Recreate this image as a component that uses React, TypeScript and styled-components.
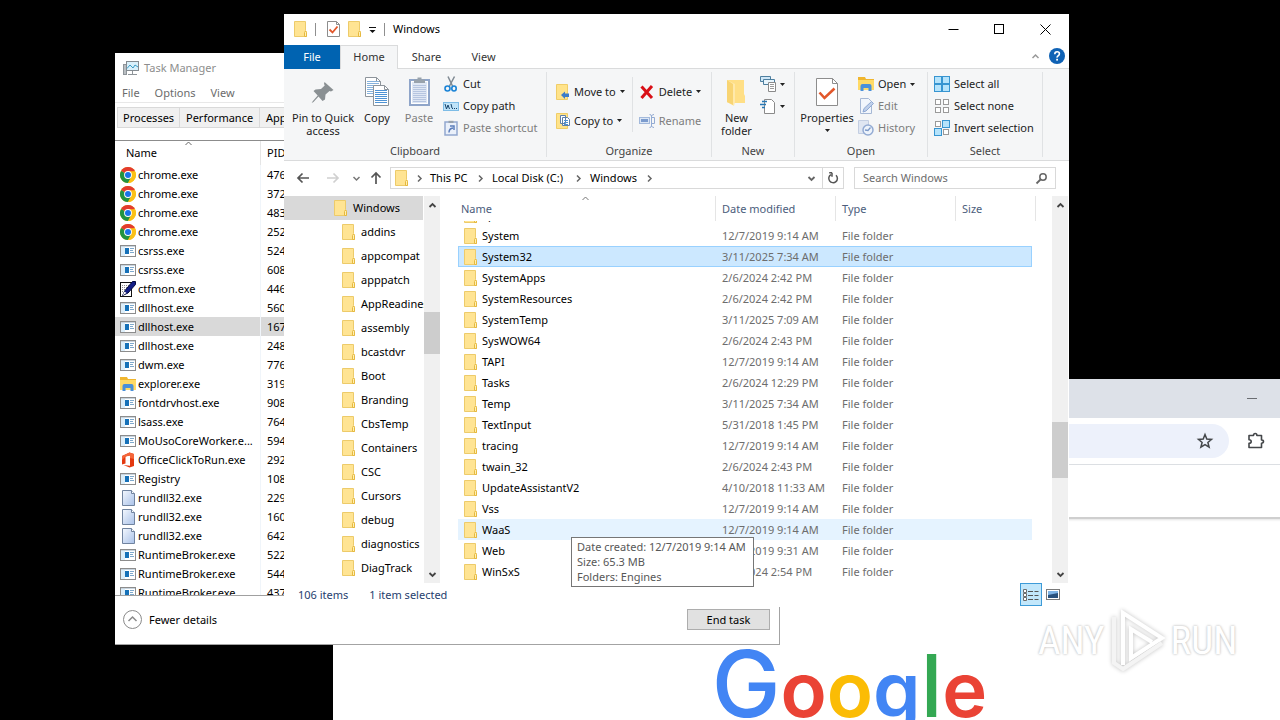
import React from "react";
import styled, { createGlobalStyle, css } from "styled-components";

const GlobalStyle = createGlobalStyle`
  *, *::before, *::after { box-sizing: border-box; }
  body { margin: 0; background: #000; }
  body, button, input, table {
    font-family: "Noto Sans", "Open Sans", sans-serif;
    font-size: 11px;
    line-height: 14px;
  }
  button { border: 0; padding: 0; background: none; color: inherit; cursor: default; }
  svg { display: block; flex: none; }
`;

/* ---------- desktop ---------- */

const Desktop = styled.main`
  position: relative;
  width: 100%;
  height: 100vh;
  overflow: hidden;
  background: #000;
  color: #000;
`;

const Window = styled.section<{ $x: number; $y: number; $w: number; $h: number }>`
  position: absolute;
  left: ${(p) => p.$x}px;
  top: ${(p) => p.$y}px;
  width: ${(p) => p.$w}px;
  height: ${(p) => p.$h}px;
  display: flex;
  flex-direction: column;
  background: #fff;
`;

/* ---------- icons ---------- */

const FolderIcon = () => (
  <svg width="13" height="16" viewBox="0 0 13 16">
    <path d="M0.5 0.5h11v9l1 1.5v4.500h-12z" fill="#ffe493" stroke="#edcb6a" />
    <path d="M10.500 15.500v-4l1-1.500 1 1.500v4z" fill="#fff0b5" stroke="#e6b93f" />
  </svg>
);

const ChromeIcon = () => (
  <svg width="16" height="16" viewBox="0 0 16 16">
    <circle cx="8" cy="8" r="8" fill="#fbc116" />
    <path d="M8 8 1.070 4A8 8 0 0 1 14.930 4z" fill="#e33b2e" />
    <path d="M8 8 1.070 4A8 8 0 0 0 8 16l3.400-6z" fill="#229342" />
    <path d="M8 4.200h6.950A8 8 0 0 1 8 16l3.300-6z" fill="#fbc116" />
    <circle cx="8" cy="8" r="3.900" fill="#fff" />
    <circle cx="8" cy="8" r="3" fill="#1a73e8" />
  </svg>
);

const AppIcon = () => (
  <svg width="16" height="16" viewBox="0 0 16 16">
    <rect x="0.500" y="2.500" width="15" height="11" fill="#fff" stroke="#8c8c8c" />
    <rect x="1" y="3" width="14" height="1" fill="#c8d4de" />
    <rect x="1" y="4" width="4" height="9" fill="#dceefa" />
    <rect x="5" y="5" width="4" height="6" fill="#1671b8" />
    <path d="M10 5.500h4M10 7.500h3M10 9.500h4" stroke="#7ea9cc" />
  </svg>
);

const PenIcon = () => (
  <svg width="16" height="16" viewBox="0 0 16 16">
    <rect x="0.500" y="1.500" width="11" height="14" fill="#fff" stroke="#111" />
    <path d="M2 4.500h8M2 6.500h8M2 8.500h6M2 10.500h4" stroke="#888" strokeDasharray="1 1" />
    <path d="M2.500 14.500 5 9.500 12.500 0.500h3v3L8 12z" fill="#121d86" stroke="#050b40" />
    <path d="m2.500 14.500 2-4 2 1.500z" fill="#fff" />
  </svg>
);

const ExplorerIcon = () => (
  <svg width="16" height="16" viewBox="0 0 16 16">
    <path d="M0 1h7l1 2h8v10H0z" fill="#f0b62f" />
    <path d="M0 4h16v10H0z" fill="#ffda66" />
    <path d="M2.500 15v-5q0-2 2-2h7q2 0 2 2v5h-3v-3h-5v3z" fill="#4a90d9" />
  </svg>
);

const OfficeIcon = () => (
  <svg width="16" height="16" viewBox="0 0 16 16">
    <path d="M9.500 0.500 14 2v12l-4.500 1.500L3.500 13 10 13.700V3.400L5.500 4.500v7L2 12.500V4z" fill="#e3380f" />
    <path d="M9.500 0.500 14 2v5l-4-1V3.400L5.500 4.500 2 8V4z" fill="#f4663a" />
  </svg>
);

const PageIcon = () => (
  <svg width="16" height="16" viewBox="0 0 16 16">
    <defs>
      <linearGradient id="page" x1="0" y1="0" x2="1" y2="1">
        <stop offset="0" stopColor="#f4f8fe" />
        <stop offset="1" stopColor="#a9c1e8" />
      </linearGradient>
    </defs>
    <path d="M2.500 0.500h9l3 3v12h-12z" fill="url(#page)" stroke="#70839f" />
    <path d="M11.500 0.500v3h3" fill="#fff" stroke="#70839f" />
  </svg>
);

const TaskManagerIcon = () => (
  <svg width="16" height="16" viewBox="0 0 16 16">
    <rect x="0.500" y="4.500" width="3" height="10" fill="#b9bec2" stroke="#8e9499" />
    <rect x="3.500" y="1.500" width="12" height="9" fill="#d9f0fb" stroke="#848b91" />
    <path d="M4 8.500 7 5l3 3 2-3 3 2" fill="none" stroke="#3b9cc5" />
    <path d="M9.500 11v3M5 14.500h9" stroke="#8e9499" />
  </svg>
);

const CheckPageSmall = () => (
  <svg width="13" height="16" viewBox="0 0 13 16">
    <path d="M0.500 0.500h9l3 3v12h-12z" fill="#fff" stroke="#8d8d8d" />
    <path d="M9.500 0.500v3h3" fill="none" stroke="#8d8d8d" />
    <path d="m2.500 8.500 3 3 5-6" fill="none" stroke="#e2572b" strokeWidth="1.800" />
  </svg>
);

const CheckPageLarge = () => (
  <svg width="32" height="32" viewBox="-5 -1 32 32">
    <path d="M0.500 0.500h16l5 5v22h-21z" fill="#fff" stroke="#8d8d8d" />
    <path d="M16.500 0.500v5h5" fill="none" stroke="#8d8d8d" />
    <path d="m3.500 14.500 5 5.500L18.500 10.500" fill="none" stroke="#e2572b" strokeWidth="2.600" />
  </svg>
);

const PinIcon = () => (
  <svg width="32" height="32" viewBox="0 0 32 32">
    <path d="m17.500 5 9 8-2.500 1.400-1.500-.400-4 3.500-.500 5-2.500 1.500-4-4.500-5 5.500-1.800 1 1-1.800 5-5.700L6.500 14l2-1.500 5.500-.500 3.700-3.500-.700-1.800z" fill="#8a9093" />
  </svg>
);

const Lines = ({ x, y, n, w, c }: { x: number; y: number; n: number; w: number; c: string }) => (
  <path d={Array.from({ length: n }, (_, i) => `M${x} ${y + i * 2 + 0.5}h${w}`).join("")} stroke={c} />
);

const CopyIcon = () => (
  <svg width="32" height="32" viewBox="0 0 32 32">
    <path d="M4.500 0.500h11l4 4v15h-15z" fill="#fff" stroke="#8d949b" />
    <path d="M15.500 0.500v4h4" fill="none" stroke="#8d949b" />
    <Lines x={6} y={4} n={7} w={12} c="#86b2dc" />
    <path d="M12.500 8.500h11l4 4v16h-15z" fill="#fff" stroke="#8d949b" />
    <path d="M23.500 8.500v4h4" fill="none" stroke="#8d949b" />
    <Lines x={14} y={13} n={7} w={12} c="#4f93d4" />
  </svg>
);

const PasteIcon = () => (
  <svg width="32" height="32" viewBox="0 0 32 32">
    <rect x="7" y="3" width="19" height="25" fill="#fff" stroke="#8fa5c9" strokeWidth="2" />
    <rect x="9" y="5" width="15" height="21" fill="#dfe7f4" />
    <Lines x={10} y={8} n={9} w={13} c="#b6c5e0" />
    <path d="M11 6V2.500h3.500V0.500h4v2H22V6z" fill="#98a2ac" />
  </svg>
);

const CutIcon = () => (
  <svg width="16" height="16" viewBox="0 0 16 16">
    <path d="M5 0.500 9.500 10M11.500 0.500 6.500 10" stroke="#7f8992" strokeWidth="1.500" fill="none" />
    <ellipse cx="4.500" cy="12.500" rx="2.500" ry="2.500" fill="none" stroke="#1a83d6" strokeWidth="1.600" />
    <ellipse cx="11" cy="12.500" rx="2.200" ry="2.500" fill="none" stroke="#1a83d6" strokeWidth="1.600" />
  </svg>
);

const CopyPathIcon = () => (
  <svg width="16" height="16" viewBox="0 0 16 16">
    <rect x="0.500" y="4.500" width="15" height="8" fill="#bfe3f8" stroke="#7dbce6" />
    <path d="m2 6 1.500 5L5 7l1.500 4M8 6l1 4" fill="none" stroke="#17456d" />
    <path d="M9 10.500h6" stroke="#17456d" strokeDasharray="1 1" />
  </svg>
);

const PasteShortcutIcon = () => (
  <svg width="16" height="16" viewBox="0 0 16 16">
    <rect x="2" y="2" width="12" height="13" fill="#eaf0fa" stroke="#92a8cf" strokeWidth="1.500" />
    <path d="M5.500 3V0.800h5V3z" fill="#98a2ac" />
    <path d="M6 12.500q0-4 4-4.500M7 6h4v4" fill="none" stroke="#5b7dbb" strokeWidth="1.500" />
  </svg>
);

const MoveToIcon = () => (
  <svg width="14" height="16" viewBox="0 0 14 16">
    <path d="M0.500 0.500h11v15h-11z" fill="#ffe38a" stroke="#f0cd68" />
    <path d="m5 11 4-3.500v2h4V13H9v2z" fill="#3d7cc9" />
  </svg>
);

const CopyToIcon = () => (
  <svg width="14" height="16" viewBox="0 0 14 16">
    <path d="M0.500 0.500h11v15h-11z" fill="#ffe38a" stroke="#f0cd68" />
    <path d="M4.500 2.500h5v8h-5zM6.500 4.500h5l2 2v6h-7z" fill="#fff" stroke="#5e7fa8" />
    <Lines x={8} y={7} n={3} w={4} c="#4f93d4" />
  </svg>
);

const DeleteIcon = () => (
  <svg width="16" height="16" viewBox="0 0 16 16">
    <path d="M2.500 2.500 13 14M13 2 2.500 14" stroke="#d90f16" strokeWidth="3" />
  </svg>
);

const RenameIcon = () => (
  <svg width="16" height="16" viewBox="0 0 16 16">
    <rect x="0.500" y="4.500" width="10" height="6" fill="#dbe6f5" stroke="#a3b9db" />
    <rect x="2" y="6" width="7" height="3" fill="#7c9cce" />
    <path d="M10.500 1.500q2 0 2 1.500v10q0 1.500-2 1.500M15 1.500q-2 0-2.500 1.500M15 14.500q-2 0-2.500-1.500M13 4.500h2.500v6H13" fill="none" stroke="#93abd3" />
  </svg>
);

const NewFolderIcon = () => (
  <svg width="32" height="32" viewBox="0 0 32 32">
    <path d="M6 3h17v14l1 2v7H8l-2-1z" fill="#ffdf86" />
    <path d="M6 3l8 4v18l-1 4-7-4z" fill="#ffe9ab" />
    <path d="M6 3l6 4v21l-6-3z" fill="#f8d473" />
  </svg>
);

const NewItemIcon = () => (
  <svg width="16" height="16" viewBox="0 0 16 16">
    <path d="M0.500 0.500h10v5h-10z" fill="#cfe7f8" stroke="#4e7f9f" />
    <path d="M3.500 3.500h11v5h-11z" fill="#e8f5fd" stroke="#4e7f9f" />
    <path d="M8.500 6.500h7v9h-7z" fill="#fff" stroke="#8a8a8a" />
    <Lines x={10} y={8} n={3} w={4} c="#9a9a9a" />
  </svg>
);

const EasyAccessIcon = () => (
  <svg width="16" height="16" viewBox="0 0 16 16">
    <path d="M4.500 1.500h7l3 3v11h-10z" fill="#fff" stroke="#8a8a8a" />
    <path d="M2 3.500h5M0 6.500h6M2 9.500h3" stroke="#2878b5" strokeWidth="1.500" />
  </svg>
);

const EditIcon = () => (
  <svg width="16" height="16" viewBox="0 0 16 16">
    <path d="M2.500 0.500h8l3 3v12h-11z" fill="#f2f6fc" stroke="#a6b8d5" />
    <path d="m5 14 1-3.500 7.500-7 2 2-7.500 7.500z" fill="#c0d0ea" stroke="#8fa9d4" />
  </svg>
);

const HistoryIcon = () => (
  <svg width="16" height="16" viewBox="0 0 16 16">
    <path d="M0.500 0.500h10v13h-10z" fill="#dfe6f2" stroke="#c3cee2" />
    <circle cx="10" cy="10" r="5" fill="#edf3fb" stroke="#93abd3" strokeWidth="1.500" />
    <path d="M12.500 7.500 10 10.500 7 10" fill="none" stroke="#7c99c8" strokeWidth="1.300" />
  </svg>
);

const SelectIcon = ({ on }: { on: boolean[] }) => (
  <svg width="16" height="16" viewBox="0 0 16 16">
    {on.map((v, i) => {
      const x = (i % 2) * 8;
      const y = Math.floor(i / 2) * 8;
      return v ? (
        <rect key={i} x={x + 0.5} y={y + 0.5} width="7" height="7" fill="#b5e3fb" stroke="#3795d1" />
      ) : (
        <rect key={i} x={x + 1.5} y={y + 1.5} width="5" height="5" fill="#fff" stroke="#9a9a9a" />
      );
    })}
  </svg>
);

const Caret = () => (
  <svg width="5" height="3" viewBox="0 0 5 3">
    <path d="M0 0h5L2.500 3z" fill="#222" />
  </svg>
);

type ChevronDir = "up" | "down" | "right";
const chevronPaths: Record<ChevronDir, string> = {
  up: "m1.500 6 3-3 3 3",
  down: "m1.500 3 3 3 3-3",
  right: "m3 1.500 3 3-3 3",
};
const Chevron = ({ dir, color = "#666", weight = 1.5 }: { dir: ChevronDir; color?: string; weight?: number }) => (
  <svg width="9" height="9" viewBox="0 0 9 9">
    <path d={chevronPaths[dir]} fill="none" stroke={color} strokeWidth={weight} />
  </svg>
);

const ArrowIcon = ({ angle, color }: { angle: number; color: string }) => (
  <svg width="14" height="14" viewBox="0 0 14 14">
    <path d="M13 7H2M6.500 2.500 2 7l4.500 4.500" transform={`rotate(${angle} 7 7)`} fill="none" stroke={color} strokeWidth="1.700" />
  </svg>
);

/* ---------- browser window ---------- */

const TabStrip = styled.header`
  display: flex;
  flex: none;
  justify-content: flex-end;
  align-items: center;
  height: 39px;
  padding: 0 109px 1px 0;
  background: #dde1e8;
`;

const BrowserBar = styled.div`
  display: flex;
  flex: none;
  align-items: center;
  gap: 18px;
  height: 47px;
  padding: 0 101px 1px 90px;
  border-bottom: 1px solid #dcdfe3;
`;

const Omnibox = styled.div`
  display: flex;
  flex: 1;
  justify-content: flex-end;
  align-items: center;
  height: 34px;
  padding-right: 15px;
  border-radius: 17px;
  background: #edf1fb;
`;

const InfoBar = styled.div`
  flex: none;
  height: 54px;
  border-bottom: 2px solid #cfcfcf;
  box-shadow: 0 1px 2px #e4e4e4;
`;

const SearchPage = styled.div`
  display: flex;
  flex: 1;
  justify-content: center;
  align-items: flex-start;
  padding-top: 115px;
`;

const Logo = styled.h1`
  margin: 0;
  font: 600 76px/100px Inter, "Open Sans", sans-serif;
  font-optical-sizing: none;
  white-space: nowrap;
`;

const LogoLetter = styled.span<{ $c: string; $size?: number }>`
  color: ${(p) => p.$c};
  font-size: ${(p) => p.$size ?? 76}px;
  font-weight: ${(p) => (p.$size ? 500 : 600)};
`;

const Browser = () => (
  <Window $x={333} $y={379} $w={1033} $h={520}>
    <TabStrip>
      <button aria-label="Minimize">
        <svg width="10" height="10" viewBox="0 0 10 10"><path d="M0 5.500h10" stroke="#6a6d72" /></svg>
      </button>
    </TabStrip>
    <BrowserBar>
      <Omnibox>
        <button aria-label="Bookmark">
          <svg width="18" height="18" viewBox="0 0 18 18">
            <path d="m9 2.500 1.800 4.600 4.700.300-3.600 3.100 1.200 4.700L9 12.600l-4.100 2.600 1.200-4.700-3.600-3.100 4.700-.300z" fill="none" stroke="#44474a" strokeWidth="1.500" />
          </svg>
        </button>
      </Omnibox>
      <button aria-label="Extensions">
        <svg width="18" height="18" viewBox="0 0 18 18">
          <path d="M2 3.500h4.500q0-2 1.700-2t1.700 2h4.600V8q2 0 2 1.600t-2 1.600v4.300H2v-4.200q2.200 0 2.200-1.800T2 7.700z" fill="none" stroke="#44474a" strokeWidth="1.600" strokeLinejoin="round" />
        </svg>
      </button>
    </BrowserBar>
    <InfoBar />
    <SearchPage>
      <Logo>
        <LogoLetter $c="#4285f4" $size={92}>G</LogoLetter>
        <LogoLetter $c="#ea4335">o</LogoLetter>
        <LogoLetter $c="#fbbc05">o</LogoLetter>
        <LogoLetter $c="#4285f4">g</LogoLetter>
        <LogoLetter $c="#34a853" $size={86}>l</LogoLetter>
        <LogoLetter $c="#ea4335">e</LogoLetter>
      </Logo>
    </SearchPage>
  </Window>
);

/* ---------- task manager ---------- */

const TaskFrame = styled(Window)`
  border-right: 1px solid #a3a3a3;
  border-bottom: 1px solid #a3a3a3;
`;

const TaskTitle = styled.header`
  display: flex;
  flex: none;
  align-items: center;
  gap: 5px;
  height: 30px;
  padding: 0 0 1px 8px;
  color: #8d8d8d;
`;

const TaskMenu = styled.nav`
  display: flex;
  flex: none;
  align-items: center;
  gap: 15px;
  height: 20px;
  padding-left: 7px;
  border-bottom: 1px solid #e8e8e8;
  color: #6b6b6b;
`;

const TaskTabs = styled.div`
  display: flex;
  flex: none;
  align-items: flex-start;
  height: 38px;
  padding: 4px 2px 0;
  border-bottom: 1px solid #8c8c8c;
`;

const TaskTab = styled.button<{ $w: number }>`
  width: ${(p) => p.$w}px;
  height: 21px;
  padding-left: 6px;
  border: 1px solid #d9d9d9;
  border-left-width: 0;
  background: #f0f0f0;
  text-align: left;
  &:first-child { padding-left: 5px; border-left-width: 1px; }
`;

const ProcessPane = styled.div`
  flex: 1;
  min-height: 0;
  overflow: hidden;
`;

const ProcessTable = styled.table`
  width: 100%;
  table-layout: fixed;
  border-collapse: separate;
  border-spacing: 0;
  th, td { padding: 0; font-weight: 400; text-align: left; white-space: nowrap; }
  th { position: relative; height: 24px; border-right: 1px solid #e5e5e5; }
  th:first-child { width: 146px; padding-left: 11px; }
  th + th, td + td { padding-left: 6px; }
  td { height: 19px; border-right: 1px solid #f0f5fa; }
`;

const ProcessRow = styled.tr<{ $selected: boolean }>`
  background: ${(p) => (p.$selected ? "#d9d9d9" : "transparent")};
`;

const ProcessName = styled.div`
  display: flex;
  align-items: center;
  gap: 2px;
  height: 19px;
  padding-left: 5px;
`;

const SortMark = styled.span<{ $x: number; $y: number }>`
  position: absolute;
  left: ${(p) => p.$x}px;
  top: ${(p) => p.$y}px;
`;

const TaskFooter = styled.footer`
  display: flex;
  flex: none;
  justify-content: space-between;
  align-items: center;
  height: 49px;
  padding: 0 9px 1px 8px;
  border-top: 1px solid #a0a0a0;
`;

const FewerButton = styled.button`
  display: flex;
  align-items: center;
  gap: 7px;
`;

const EndTask = styled.button`
  width: 83px;
  height: 21px;
  border: 1px solid #adadad;
  background: #e1e1e1;
`;

const processes: [React.FC, string, string][] = [
  [ChromeIcon, "chrome.exe", "476"],
  [ChromeIcon, "chrome.exe", "372"],
  [ChromeIcon, "chrome.exe", "483"],
  [ChromeIcon, "chrome.exe", "252"],
  [AppIcon, "csrss.exe", "524"],
  [AppIcon, "csrss.exe", "608"],
  [PenIcon, "ctfmon.exe", "446"],
  [AppIcon, "dllhost.exe", "560"],
  [AppIcon, "dllhost.exe", "167"],
  [AppIcon, "dllhost.exe", "248"],
  [AppIcon, "dwm.exe", "776"],
  [ExplorerIcon, "explorer.exe", "319"],
  [AppIcon, "fontdrvhost.exe", "908"],
  [AppIcon, "lsass.exe", "764"],
  [AppIcon, "MoUsoCoreWorker.e...", "594"],
  [OfficeIcon, "OfficeClickToRun.exe", "292"],
  [AppIcon, "Registry", "108"],
  [PageIcon, "rundll32.exe", "229"],
  [PageIcon, "rundll32.exe", "160"],
  [PageIcon, "rundll32.exe", "642"],
  [AppIcon, "RuntimeBroker.exe", "522"],
  [AppIcon, "RuntimeBroker.exe", "544"],
  [AppIcon, "RuntimeBroker.exe", "437"],
];

const TaskManager = () => (
  <TaskFrame $x={115} $y={53} $w={665} $h={592}>
    <TaskTitle><TaskManagerIcon />Task Manager</TaskTitle>
    <TaskMenu>
      <button>File</button>
      <button>Options</button>
      <button>View</button>
    </TaskMenu>
    <TaskTabs>
      <TaskTab $w={63}>Processes</TaskTab>
      <TaskTab $w={80}>Performance</TaskTab>
      <TaskTab $w={74}>App</TaskTab>
    </TaskTabs>
    <ProcessPane>
      <ProcessTable>
        <thead>
          <tr>
            <th>
              Name
              <SortMark $x={69} $y={-2}><Chevron dir="up" color="#666" weight={1} /></SortMark>
            </th>
            <th>PID</th>
          </tr>
        </thead>
        <tbody>
          {processes.map(([Icon, name, pid], i) => (
            <ProcessRow key={i} $selected={i === 8}>
              <td><ProcessName><Icon />{name}</ProcessName></td>
              <td>{pid}</td>
            </ProcessRow>
          ))}
        </tbody>
      </ProcessTable>
    </ProcessPane>
    <TaskFooter>
      <FewerButton>
        <svg width="19" height="19" viewBox="0 0 19 19">
          <circle cx="9.500" cy="9.500" r="9" fill="#fff" stroke="#8a8a8a" />
          <path d="m5.500 11 4-4 4 4" fill="none" stroke="#8a8a8a" strokeWidth="1.500" />
        </svg>
        Fewer details
      </FewerButton>
      <EndTask>End task</EndTask>
    </TaskFooter>
  </TaskFrame>
);

/* ---------- explorer ---------- */

const TitleBar = styled.header`
  display: flex;
  flex: none;
  align-items: center;
  height: 31px;
  padding: 0 1px 1px 10px;
`;

const QuickAccess = styled.div`
  display: flex;
  flex: 1;
  align-items: center;
  gap: 8px;
`;

const Divider = styled.span`
  width: 1px;
  height: 13px;
  background: #8f8f8f;
  & + svg { margin-left: 3px; }
`;

const CaptionButton = styled.button`
  display: flex;
  justify-content: center;
  align-items: center;
  width: 46px;
  height: 30px;
`;

const RibbonTabs = styled.nav`
  display: flex;
  flex: none;
  height: 24px;
  padding-right: 4px;
  border-bottom: 1px solid #dadbdc;
`;

const RibbonTab = styled.button<{ $kind?: "file" | "active" }>`
  width: 57px;
  height: 24px;
  color: #333;
  ${(p) => p.$kind === "file" && css`width: 56px; background: #0063b1; color: #fff;`}
  ${(p) => p.$kind === "active" && css`
    width: 58px;
    padding-bottom: 2px;
    background: #f5f6f7;
    border: 1px solid #dadbdc;
    border-bottom: 0;
  `}
`;

const RibbonTools = styled.div`
  display: flex;
  align-items: center;
  gap: 9px;
  margin-left: auto;
  padding-bottom: 1px;
`;

const Ribbon = styled.div`
  display: flex;
  flex: none;
  height: 92px;
  border-bottom: 1px solid #dadbdc;
  background: #f5f6f7;
`;

const RibbonGroup = styled.section<{ $w: number }>`
  display: flex;
  flex-direction: column;
  width: ${(p) => p.$w}px;
  margin: 3px 0;
  border-right: 1px solid #e0e2e4;
`;

const GroupTools = styled.div`
  display: flex;
  flex: 1;
  padding-left: 6px;
`;

const GroupLabel = styled.h2`
  margin: 0;
  height: 13px;
  color: #444;
  font-size: 11px;
  font-weight: 400;
  line-height: 14px;
  text-align: center;
`;

const ToolColumn = styled.div<{ $top?: number; $left?: number }>`
  display: flex;
  flex-direction: column;
  margin: ${(p) => p.$top ?? 0}px 0 0 ${(p) => p.$left ?? 0}px;
`;

const SmallTool = styled.button<{ $off?: boolean; $tall?: boolean }>`
  display: flex;
  align-items: center;
  gap: 4px;
  height: ${(p) => (p.$tall ? 29 : 22)}px;
  color: ${(p) => (p.$off ? "#7d7d7d" : "#222")};
  white-space: nowrap;
`;

const LargeTool = styled.button<{ $w: number; $off?: boolean }>`
  display: flex;
  flex-direction: column;
  align-items: center;
  width: ${(p) => p.$w}px;
  padding-top: 5px;
  color: ${(p) => (p.$off ? "#7d7d7d" : "#222")};
  line-height: 13px;
  white-space: nowrap;
  svg + span { margin-top: 2px; }
  span + svg { margin-top: 5px; }
`;

const ToolRule = styled.span`
  width: 1px;
  margin: 5px 6px 12px 7px;
  background: #e0e2e4;
`;

const AddressRow = styled.div`
  display: flex;
  flex: none;
  align-items: center;
  height: 35px;
  padding: 0 13px 1px 12px;
`;

const NavButton = styled.button<{ $gap?: number }>`
  margin-right: ${(p) => p.$gap ?? 7}px;
`;

const AddressBox = styled.div`
  display: flex;
  flex: 1;
  align-items: center;
  height: 22px;
  padding-left: 4px;
  border: 1px solid #d9d9d9;
`;

const AddressEnd = styled.div`
  display: flex;
  margin-left: auto;
`;

const Crumb = styled.button<{ $w: number }>`
  display: flex;
  justify-content: space-between;
  align-items: center;
  width: ${(p) => p.$w}px;
  margin-left: 7px;
  white-space: nowrap;
`;

const BoxButton = styled.button<{ $ruled?: boolean }>`
  display: flex;
  justify-content: center;
  align-items: center;
  width: 21px;
  height: 20px;
  border-left: ${(p) => (p.$ruled ? "1px solid #d9d9d9" : "0")};
`;

const SearchBox = styled.label`
  display: flex;
  align-items: center;
  width: 202px;
  height: 22px;
  margin-left: 10px;
  padding: 0 7px 0 8px;
  border: 1px solid #d9d9d9;
  input {
    flex: 1;
    min-width: 0;
    height: 14px;
    padding: 0;
    border: 0;
    outline: 0;
  }
  input::placeholder { color: #6d6d6d; opacity: 1; }
`;

const Body = styled.div`
  display: flex;
  flex: 1;
  min-height: 0;
  padding-right: 1px;
`;

const Tree = styled.ul`
  width: 140px;
  margin: 0;
  padding: 0 1px 0 0;
  overflow: hidden;
  list-style: none;
`;

const TreeItem = styled.li<{ $root?: boolean }>`
  display: flex;
  align-items: center;
  gap: 6px;
  height: 24px;
  padding-left: ${(p) => (p.$root ? 50 : 58)}px;
  background: ${(p) => (p.$root ? "#d9d9d9" : "transparent")};
  white-space: nowrap;
`;

const ScrollTrack = styled.div`
  display: flex;
  flex: none;
  flex-direction: column;
  align-items: center;
  justify-content: space-between;
  width: 16px;
  padding: 5px 0 4px;
  background: #f0f0f0;
`;

const ScrollLane = styled.div<{ $before: number }>`
  flex: 1;
  width: 16px;
  padding-top: ${(p) => p.$before}px;
`;

const ScrollThumb = styled.div<{ $size: number }>`
  height: ${(p) => p.$size}px;
  background: #cdcdcd;
`;

const ListPane = styled.div`
  flex: 1;
  min-width: 0;
  padding-left: 18px;
  overflow: hidden;
`;

const FileTable = styled.table`
  width: 578px;
  table-layout: fixed;
  border-collapse: separate;
  border-spacing: 0;
  th, td { padding: 0; font-weight: 400; text-align: left; white-space: nowrap; }
  th {
    position: relative;
    height: 25px;
    padding-left: 6px;
    border-right: 1px solid #e5e5e5;
    color: #4c5d7c;
  }
  th:first-child { width: 258px; padding-left: 3px; }
  th:last-child { width: 80px; }
  td { height: 21px; padding-left: 6px; color: #6d6d6d; background-clip: padding-box; }
  td:first-child { color: #000; }
  td:last-child { border-right: 4px solid transparent; }
`;

const FileRow = styled.tr<{ $state?: string }>`
  ${(p) => p.$state === "hover" && css`td { background-color: #e5f3ff; }`}
  ${(p) => p.$state === "selected" && css`
    td { background-color: #cce8ff; box-shadow: inset 0 1px #99d1ff, inset 0 -1px #99d1ff; }
    td:first-child { box-shadow: inset 0 1px #99d1ff, inset 0 -1px #99d1ff, inset 1px 0 #99d1ff; }
    td:last-child { box-shadow: inset 0 1px #99d1ff, inset 0 -1px #99d1ff, inset -1px 0 #99d1ff; }
  `}
`;

const FileName = styled.div`
  display: flex;
  flex: none;
  align-items: center;
  gap: 5px;
  height: 21px;
`;

const PeekRow = styled.tr`
  td { height: 4px; }
`;

const Peek = styled.div`
  display: flex;
  align-items: flex-end;
  height: 4px;
  overflow: hidden;
`;

const StatusBar = styled.footer`
  display: flex;
  flex: none;
  align-items: center;
  gap: 21px;
  height: 24px;
  padding: 0 9px 0 14px;
  color: #26406e;
`;

const ViewSwitch = styled.div`
  display: flex;
  align-items: center;
  gap: 4px;
  height: 24px;
  margin-left: auto;
  padding-bottom: 1px;
`;

const ViewButton = styled.button<{ $on?: boolean }>`
  display: flex;
  justify-content: center;
  align-items: center;
  width: ${(p) => (p.$on ? 22 : 14)}px;
  height: 23px;
  ${(p) => p.$on && css`border: 1px solid #3d9bd8; background: #c2e7fb;`}
`;

const Tooltip = styled.div`
  position: absolute;
  left: 287px;
  top: 523px;
  width: 183px;
  padding: 1px 5px 2px;
  border: 1px solid #767676;
  background: #fff;
  color: #575757;
  line-height: 15px;
  white-space: nowrap;
`;

const treeItems = [
  "addins", "appcompat", "apppatch", "AppReadiness", "assembly", "bcastdvr", "Boot", "Branding",
  "CbsTemp", "Containers", "CSC", "Cursors", "debug", "diagnostics", "DiagTrack",
];

const files: [string, string, string?][] = [
  ["System", "12/7/2019 9:14 AM"],
  ["System32", "3/11/2025 7:34 AM", "selected"],
  ["SystemApps", "2/6/2024 2:42 PM"],
  ["SystemResources", "2/6/2024 2:42 PM"],
  ["SystemTemp", "3/11/2025 7:09 AM"],
  ["SysWOW64", "2/6/2024 2:43 PM"],
  ["TAPI", "12/7/2019 9:14 AM"],
  ["Tasks", "2/6/2024 12:29 PM"],
  ["Temp", "3/11/2025 7:34 AM"],
  ["TextInput", "5/31/2018 1:45 PM"],
  ["tracing", "12/7/2019 9:14 AM"],
  ["twain_32", "2/6/2024 2:43 PM"],
  ["UpdateAssistantV2", "4/10/2018 11:33 AM"],
  ["Vss", "12/7/2019 9:14 AM"],
  ["WaaS", "12/7/2019 9:14 AM", "hover"],
  ["Web", "12/7/2019 9:31 AM"],
  ["WinSxS", "2/6/2024 2:54 PM"],
];

const Scrollbar = ({ before, size }: { before: number; size: number }) => (
  <ScrollTrack>
    <Chevron dir="up" color="#444" weight={1.8} />
    <ScrollLane $before={before}><ScrollThumb $size={size} /></ScrollLane>
    <Chevron dir="down" color="#444" weight={1.8} />
  </ScrollTrack>
);

const Explorer = () => (
  <Window $x={284} $y={14} $w={785} $h={593}>
    <TitleBar>
      <QuickAccess>
        <FolderIcon />
        <Divider />
        <CheckPageSmall />
        <FolderIcon />
        <svg width="7" height="7" viewBox="0 0 7 7"><path d="M0 1.500h7" stroke="#111" /><path d="M0.500 4h6l-3 3z" fill="#111" /></svg>
        <Divider />
        <span>Windows</span>
      </QuickAccess>
      <CaptionButton aria-label="Minimize">
        <svg width="11" height="11" viewBox="0 0 11 11"><path d="M0.500 5.500h10" stroke="#000" /></svg>
      </CaptionButton>
      <CaptionButton aria-label="Maximize">
        <svg width="11" height="11" viewBox="0 0 11 11"><rect x="0.500" y="0.500" width="9" height="9" fill="none" stroke="#000" /></svg>
      </CaptionButton>
      <CaptionButton aria-label="Close">
        <svg width="11" height="11" viewBox="0 0 11 11"><path d="m0.500 0.500 10 10M10.500 0.500l-10 10" stroke="#000" /></svg>
      </CaptionButton>
    </TitleBar>
    <RibbonTabs>
      <RibbonTab $kind="file">File</RibbonTab>
      <RibbonTab $kind="active">Home</RibbonTab>
      <RibbonTab>Share</RibbonTab>
      <RibbonTab>View</RibbonTab>
      <RibbonTools>
        <Chevron dir="up" color="#999" />
        <button aria-label="Help">
          <svg width="16" height="16" viewBox="0 0 16 16">
            <circle cx="8" cy="8" r="8" fill="#0f62b5" />
            <path d="M5.800 6.200q0-2.400 2.300-2.400t2.300 2q0 1.200-1.200 1.900T8.100 9.600" fill="none" stroke="#fff" strokeWidth="1.600" />
            <rect x="7.200" y="10.800" width="1.800" height="1.800" fill="#fff" />
          </svg>
        </button>
      </RibbonTools>
    </RibbonTabs>
    <Ribbon>
      <RibbonGroup $w={263}>
        <GroupTools>
          <LargeTool $w={66}><PinIcon /><span>Pin to Quick</span><span>access</span></LargeTool>
          <LargeTool $w={42}><CopyIcon /><span>Copy</span></LargeTool>
          <LargeTool $w={42} $off><PasteIcon /><span>Paste</span></LargeTool>
          <ToolColumn $top={1} $left={3}>
            <SmallTool><CutIcon />Cut</SmallTool>
            <SmallTool><CopyPathIcon />Copy path</SmallTool>
            <SmallTool $off><PasteShortcutIcon />Paste shortcut</SmallTool>
          </ToolColumn>
        </GroupTools>
        <GroupLabel>Clipboard</GroupLabel>
      </RibbonGroup>
      <RibbonGroup $w={165}>
        <GroupTools>
          <ToolColumn $top={5} $left={3}>
            <SmallTool $tall><MoveToIcon />Move to<Caret /></SmallTool>
            <SmallTool $tall><CopyToIcon />Copy to<Caret /></SmallTool>
          </ToolColumn>
          <ToolRule />
          <ToolColumn $top={5}>
            <SmallTool $tall><DeleteIcon />Delete <Caret /></SmallTool>
            <SmallTool $tall $off><RenameIcon />Rename</SmallTool>
          </ToolColumn>
        </GroupTools>
        <GroupLabel>Organize</GroupLabel>
      </RibbonGroup>
      <RibbonGroup $w={83}>
        <GroupTools>
          <LargeTool $w={37}><NewFolderIcon /><span>New</span><span>folder</span></LargeTool>
          <ToolColumn $top={1} $left={5}>
            <SmallTool aria-label="New item"><NewItemIcon /><Caret /></SmallTool>
            <SmallTool aria-label="Easy access"><EasyAccessIcon /><Caret /></SmallTool>
          </ToolColumn>
        </GroupTools>
        <GroupLabel>New</GroupLabel>
      </RibbonGroup>
      <RibbonGroup $w={133}>
        <GroupTools>
          <LargeTool $w={52}><CheckPageLarge /><span>Properties</span><Caret /></LargeTool>
          <ToolColumn $top={1} $left={5}>
            <SmallTool><ExplorerIcon />Open <Caret /></SmallTool>
            <SmallTool $off><EditIcon />Edit</SmallTool>
            <SmallTool $off><HistoryIcon />History</SmallTool>
          </ToolColumn>
        </GroupTools>
        <GroupLabel>Open</GroupLabel>
      </RibbonGroup>
      <RibbonGroup $w={115}>
        <GroupTools>
          <ToolColumn $top={1}>
            <SmallTool><SelectIcon on={[true, true, true, true]} />Select all</SmallTool>
            <SmallTool><SelectIcon on={[false, false, false, false]} />Select none</SmallTool>
            <SmallTool><SelectIcon on={[false, true, true, false]} />Invert selection</SmallTool>
          </ToolColumn>
        </GroupTools>
        <GroupLabel>Select</GroupLabel>
      </RibbonGroup>
    </Ribbon>
    <AddressRow>
      <NavButton $gap={16} aria-label="Back"><ArrowIcon angle={0} color="#555" /></NavButton>
      <NavButton $gap={12} aria-label="Forward"><ArrowIcon angle={180} color="#d0d0d0" /></NavButton>
      <NavButton $gap={8} aria-label="Recent locations"><Chevron dir="down" color="#777" /></NavButton>
      <NavButton aria-label="Up"><ArrowIcon angle={90} color="#555" /></NavButton>
      <AddressBox>
        <FolderIcon />
        <Crumb $w={8} aria-label="Path root"><Chevron dir="right" /></Crumb>
        <Crumb $w={55}>This PC<Chevron dir="right" /></Crumb>
        <Crumb $w={91}>Local Disk (C:)<Chevron dir="right" /></Crumb>
        <Crumb $w={64}>Windows<Chevron dir="right" /></Crumb>
        <AddressEnd>
          <BoxButton aria-label="Previous locations"><Chevron dir="down" weight={1.8} /></BoxButton>
          <BoxButton $ruled aria-label="Refresh">
            <svg width="12" height="12" viewBox="0 0 12 12">
              <path d="M9 3.200A4.300 4.300 0 1 1 4 2.600M5 0.800H2.200M5 0.800v4" fill="none" stroke="#555" strokeWidth="1.500" />
            </svg>
          </BoxButton>
        </AddressEnd>
      </AddressBox>
      <SearchBox>
        <input type="text" placeholder="Search Windows" aria-label="Search Windows" />
        <svg width="13" height="13" viewBox="0 0 13 13">
          <circle cx="8" cy="5" r="3.200" fill="none" stroke="#666" strokeWidth="1.500" />
          <path d="M5.500 7.500 1.500 11.500" stroke="#666" strokeWidth="1.800" />
        </svg>
      </SearchBox>
    </AddressRow>
    <Body>
      <Tree>
        <TreeItem $root><FolderIcon />Windows</TreeItem>
        {treeItems.map((name) => <TreeItem key={name}><FolderIcon />{name}</TreeItem>)}
      </Tree>
      <Scrollbar before={102} size={42} />
      <ListPane>
        <FileTable>
          <thead>
            <tr>
              <th>
                Name
                <SortMark $x={123} $y={-2}><Chevron dir="up" color="#777" weight={1} /></SortMark>
              </th>
              <th>Date modified</th>
              <th>Type</th>
              <th>Size</th>
            </tr>
          </thead>
          <tbody>
            <PeekRow>
              <td><Peek><FileName><FolderIcon />Speech</FileName></Peek></td>
              <td /><td /><td />
            </PeekRow>
            {files.map(([name, date, state]) => (
              <FileRow key={name} $state={state}>
                <td><FileName><FolderIcon />{name}</FileName></td>
                <td>{date}</td>
                <td>File folder</td>
                <td />
              </FileRow>
            ))}
          </tbody>
        </FileTable>
      </ListPane>
      <Scrollbar before={212} size={56} />
    </Body>
    <StatusBar>
      <span>106 items</span>
      <span>1 item selected</span>
      <ViewSwitch>
        <ViewButton $on aria-label="Details">
          <svg width="16" height="14" viewBox="0 0 16 14">
            <path d="M0.500 1.500h3v3h-3zM0.500 5.500h3v3h-3zM0.500 9.500h3v3h-3z" fill="#fff" stroke="#6d6d6d" />
            <path d="M5 3.500h5M11.500 3.500h4M5 7.500h5M11.500 7.500h4M5 11.500h5M11.500 11.500h4" stroke="#555" />
          </svg>
        </ViewButton>
        <ViewButton aria-label="Large icons">
          <svg width="14" height="11" viewBox="0 0 14 11">
            <rect x="0.500" y="0.500" width="13" height="10" fill="#fff" stroke="#7a7a7a" />
            <rect x="2" y="2" width="10" height="4" fill="#7fb4e6" />
            <path d="M2 6 12 4v5H2z" fill="#28517d" />
          </svg>
        </ViewButton>
      </ViewSwitch>
    </StatusBar>
    <Tooltip role="tooltip">
      Date created: 12/7/2019 9:14 AM<br />
      Size: 65.3 MB<br />
      Folders: Engines
    </Tooltip>
  </Window>
);

/* ---------- watermark ---------- */

const Watermark = styled.div`
  position: absolute;
  left: 1038px;
  top: 609px;
  display: flex;
  align-items: center;
  gap: 5px;
  color: #fff;
  font: 400 39px/64px "Roboto Condensed", "Open Sans Condensed", Roboto, sans-serif;
  text-shadow: 0 0 3px #c2c2c2, 0 0 2px #d4d4d4;
  pointer-events: none;
  svg { filter: drop-shadow(0 0 2px #c2c2c2); }
`;

export default function App() {
  return (
    <>
      <GlobalStyle />
      <Desktop>
        <Browser />
        <TaskManager />
        <Explorer />
        <Watermark>
          <span>ANY</span>
          <svg width="56" height="64" viewBox="0 0 56 64">
            <path d="M13 56V4L52 29 21 49V20L42 33" fill="none" stroke="#fff" strokeWidth="4" />
            <path d="M4 8v46l9 6 39-26" fill="none" stroke="#f4f4f4" strokeWidth="4" />
          </svg>
          <span>RUN</span>
        </Watermark>
      </Desktop>
    </>
  );
}
